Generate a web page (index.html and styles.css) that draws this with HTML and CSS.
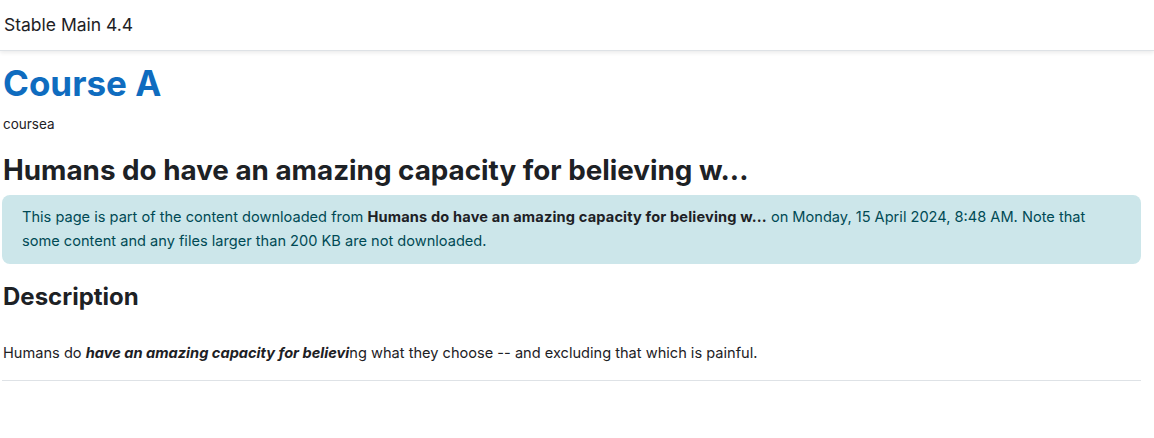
FILE: index.html
```html
<!DOCTYPE html>
<html lang="en">
<head>
<meta charset="utf-8">
<title>Humans do have an amazing capacity for believing w...</title>
<link rel="stylesheet" href="styles.css">
</head>
<body>
<header class="navbar">
  <span class="brand">Stable Main 4.4</span>
</header>
<main class="page">
  <h1 class="course-title">Course A</h1>
  <div class="shortname">coursea</div>
  <h2 class="activity-title">Humans do have an amazing capacity for believing w...</h2>
  <div class="alert">This page is part of the content downloaded from <strong>Humans do have an amazing capacity for believing w...</strong> on Monday, 15 April 2024, 8:48 AM. Note that some content and any files larger than 200 KB are not downloaded.</div>
  <h3 class="section-title">Description</h3>
  <div class="description">
    <p>Humans do <strong><em>have an amazing capacity for believi</em></strong>ng what they choose -- and excluding that which is painful.</p>
  </div>
</main>
</body>
</html>
```
FILE: styles.css
```css
* { box-sizing: border-box; }
html, body { margin: 0; padding: 0; background: #fff; }
body {
  font-family: Inter, "Noto Sans", "Liberation Sans", sans-serif;
  color: #1d2125;
  font-size: 15px;
  line-height: 1.5;
}
.navbar {
  height: 51px;
  display: flex;
  align-items: center;
  padding: 0 4px;
  border-bottom: 1px solid #dee2e6;
  box-shadow: 0 2px 4px rgba(0,0,0,0.08);
}
.brand { font-size: 17.5px; color: #1d2125; }
.page { padding: 0 13px 0 2px; }
.course-title {
  margin: 11px 0 0 1px;
  font-size: 35px;
  font-weight: 700;
  line-height: 1.2;
  color: #0f6cbf;
}
.shortname { font-size: 13.5px; margin: 10px 0 0 1px; }
.activity-title {
  margin: 20px 0 7px 1px;
  font-size: 27.8px;
  font-weight: 700;
  line-height: 1.2;
}
.alert {
  background: #cce6ea;
  color: #004a55;
  border-radius: 8px;
  padding: 10px 20px 11px;
  font-size: 14.6px;
  line-height: 24px;
}
.alert strong { color: #1d2125; font-weight: 700; letter-spacing: 0.15px; }
.section-title {
  margin: 19px 0 0 1px;
  font-size: 24px;
  font-weight: 700;
  line-height: 1.2;
}
.description {
  border-bottom: 1px solid #dee2e6;
  padding: 32px 0 16px 1px;
}
.description p { margin: 0; font-size: 14.6px; line-height: 21px; }
```
